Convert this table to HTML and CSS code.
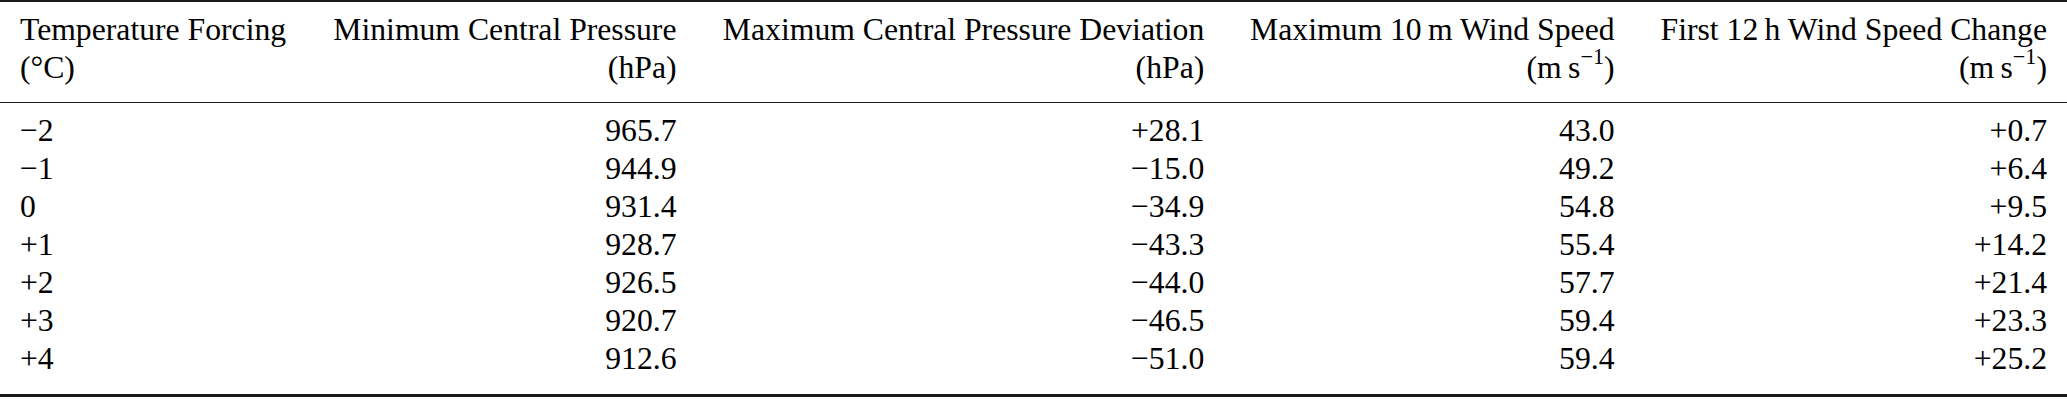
FILE: index.html
```html
<!DOCTYPE html>
<html lang="en">
<head>
<meta charset="utf-8">
<title>Temperature forcing table</title>
<link rel="stylesheet" href="styles.css">
</head>
<body>
<table class="data">
  <thead>
    <tr class="h1">
      <th class="l">Temperature Forcing</th>
      <th>Minimum Central Pressure</th>
      <th>Maximum Central Pressure Deviation</th>
      <th>Maximum 10&thinsp;m Wind Speed</th>
      <th>First 12&thinsp;h Wind Speed Change</th>
    </tr>
    <tr class="h2">
      <th class="l">(°C)</th>
      <th>(hPa)</th>
      <th>(hPa)</th>
      <th>(m&thinsp;s<sup>−1</sup>)</th>
      <th>(m&thinsp;s<sup>−1</sup>)</th>
    </tr>
  </thead>
  <tbody>
    <tr class="first"><td class="l">−2</td><td>965.7</td><td>+28.1</td><td>43.0</td><td>+0.7</td></tr>
    <tr><td class="l">−1</td><td>944.9</td><td>−15.0</td><td>49.2</td><td>+6.4</td></tr>
    <tr><td class="l">0</td><td>931.4</td><td>−34.9</td><td>54.8</td><td>+9.5</td></tr>
    <tr><td class="l">+1</td><td>928.7</td><td>−43.3</td><td>55.4</td><td>+14.2</td></tr>
    <tr><td class="l">+2</td><td>926.5</td><td>−44.0</td><td>57.7</td><td>+21.4</td></tr>
    <tr><td class="l">+3</td><td>920.7</td><td>−46.5</td><td>59.4</td><td>+23.3</td></tr>
    <tr class="last"><td class="l">+4</td><td>912.6</td><td>−51.0</td><td>59.4</td><td>+25.2</td></tr>
  </tbody>
</table>
</body>
</html>
```

FILE: styles.css
```css
html, body {
  margin: 0;
  padding: 0;
  background: #ffffff;
}

body {
  font-family: "Liberation Serif", "Times New Roman", serif;
  font-size: 31.7px;
  color: #000000;
}

.data {
  width: 2067px;
  border-collapse: separate;
  border-spacing: 0;
  border-top: 2px solid #1a1a1a;
  border-bottom: 3px solid #1a1a1a;
}

.data th,
.data td {
  font-weight: normal;
  text-align: right;
  line-height: 38px;
  padding: 0 22px;
  white-space: nowrap;
  vertical-align: baseline;
}

.data th:first-child,
.data td:first-child {
  padding-left: 20px;
}

.data th:last-child,
.data td:last-child {
  padding-right: 20px;
}

.data .l {
  text-align: left;
}

.h1 th {
  padding-top: 9px;
}

.h2 th {
  padding-bottom: 15px;
  border-bottom: 1.6px solid #1a1a1a;
}

.first td {
  padding-top: 9px;
}

.last td {
  padding-bottom: 16px;
}

sup {
  font-size: 0.7em;
  line-height: 0;
  vertical-align: 0.62em;
}
```
